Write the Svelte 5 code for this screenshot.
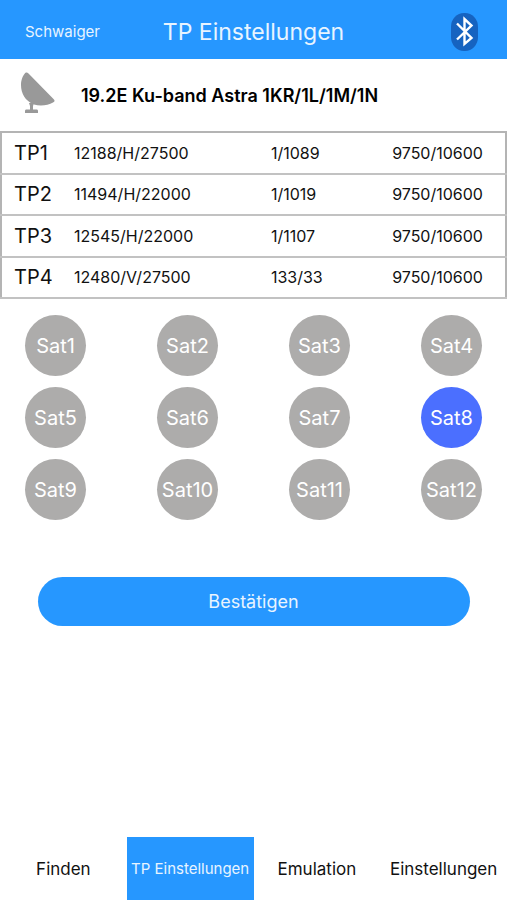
<script>
  const transponders = [
    { name: 'TP1', signal: '12188/H/27500', ids: '1/1089', lo: '9750/10600' },
    { name: 'TP2', signal: '11494/H/22000', ids: '1/1019', lo: '9750/10600' },
    { name: 'TP3', signal: '12545/H/22000', ids: '1/1107', lo: '9750/10600' },
    { name: 'TP4', signal: '12480/V/27500', ids: '133/33', lo: '9750/10600' }
  ];
  const satellites = Array.from({ length: 12 }, (_, i) => `Sat${i + 1}`);
  const tabs = ['Finden', 'TP Einstellungen', 'Emulation', 'Einstellungen'];

  let selected = $state('Sat8');
  let activeTab = $state('TP Einstellungen');
</script>

<div class="app">
  <header>
    <a class="brand" href="#home">Schwaiger</a>
    <h1>TP Einstellungen</h1>
    <button class="bluetooth" type="button" aria-label="Bluetooth">
      <svg width="27" height="38" viewBox="0 0 27 38" aria-hidden="true">
        <rect width="27" height="38" rx="13" ry="14" fill="#1663c0" />
        <path d="M6 10.500L20.500 25L13.500 31V6L20.500 12.500L6 26.500" fill="none" stroke="#fff" stroke-width="2.400" />
      </svg>
    </button>
  </header>

  <main>
    <section class="satellite">
      <svg width="34" height="42" viewBox="0 0 34 42" aria-hidden="true">
        <path d="M4.500 0.800C5.500 0 6.500 0.500 7.500 1.500L32.500 27C34 28.500 34 29.500 32 30.500C27 33.500 19 34.500 13 32.500C4 29 0 21 0 13C0 8 2 3 4.500 0.800Z" fill="#999" />
        <path d="M8 31H13L12 34V37.500H16Q17 37.500 17 39V41H4V39Q4 37.500 5 37.500H9V34Z" fill="#999" />
      </svg>
      <h2>19.2E Ku-band Astra 1KR/1L/1M/1N</h2>
    </section>

    <table>
      <tbody>
        {#each transponders as tp}
          <tr>
            <th scope="row">{tp.name}</th>
            <td class="signal">{tp.signal}</td>
            <td class="ids">{tp.ids}</td>
            <td>{tp.lo}</td>
          </tr>
        {/each}
      </tbody>
    </table>

    <div class="sats">
      {#each satellites as sat}
        <button
          type="button"
          class:selected={selected === sat}
          aria-pressed={selected === sat}
          onclick={() => (selected = sat)}>{sat}</button>
      {/each}
    </div>

    <button class="confirm" type="button">Bestätigen</button>
  </main>

  <nav>
    {#each tabs as tab}
      <button
        type="button"
        class:active={activeTab === tab}
        aria-current={activeTab === tab ? 'page' : undefined}
        onclick={() => (activeTab = tab)}>{tab}</button>
    {/each}
  </nav>
</div>

<style>
  :global(body) {
    margin: 0;
    background: #fff;
  }

  .app {
    display: flex;
    flex-direction: column;
    min-height: 100vh;
    font-family: Inter, Roboto, sans-serif;
    color: #111;
  }

  button {
    padding: 0;
    border: 0;
    background: none;
    color: inherit;
    font: inherit;
    cursor: pointer;
  }

  svg {
    display: block;
  }

  header {
    display: grid;
    grid-template-columns: 1fr auto 1fr;
    align-items: center;
    height: 59px;
    padding: 4px 25px 0;
    box-sizing: border-box;
    background: #2697ff;
    color: #e8f4ff;
  }

  .brand {
    color: inherit;
    font-size: 15px;
    text-decoration: none;
  }

  h1 {
    margin: 0;
    font-size: 23px;
    font-weight: 400;
  }

  .bluetooth {
    justify-self: end;
    margin-right: 4px;
  }

  .satellite {
    display: flex;
    align-items: center;
    gap: 26px;
    height: 72px;
    padding-left: 21px;
  }

  .satellite svg {
    margin-bottom: 4px;
  }

  h2 {
    margin: 0;
    font-size: 18px;
    font-weight: 600;
    color: #000;
  }

  table {
    width: 100%;
    height: 168px;
    table-layout: fixed;
    border-collapse: collapse;
    border: 2px solid #b4b4b4;
  }

  tr {
    border-bottom: 2px solid #c2c2c2;
  }

  th,
  td {
    padding: 0;
    font-size: 16px;
    font-weight: 400;
    text-align: left;
  }

  th {
    width: 60px;
    padding-left: 12px;
    font-size: 20px;
  }

  .signal {
    width: 39%;
  }

  .ids {
    width: 24%;
  }

  .sats {
    display: grid;
    grid-template-columns: repeat(4, 61px);
    justify-content: space-between;
    gap: 11px 0;
    padding: 16px 25px 0;
  }

  .sats button {
    height: 61px;
    border-radius: 50%;
    background: #adacab;
    color: #fff;
    font-size: 20px;
    white-space: nowrap;
  }

  .sats .selected {
    background: #4b6fff;
  }

  .confirm {
    display: block;
    width: calc(100% - 75px);
    height: 49px;
    margin: 57px auto 24px;
    border-radius: 25px;
    background: #2697ff;
    color: #e8f4ff;
    font-size: 18px;
  }

  nav {
    display: grid;
    grid-template-columns: repeat(4, 1fr);
    height: 63px;
    margin-top: auto;
  }

  nav button {
    min-width: 0;
    font-size: 17px;
    white-space: nowrap;
  }

  nav .active {
    background: #2697ff;
    color: #e8f4ff;
    font-size: 15px;
  }
</style>
